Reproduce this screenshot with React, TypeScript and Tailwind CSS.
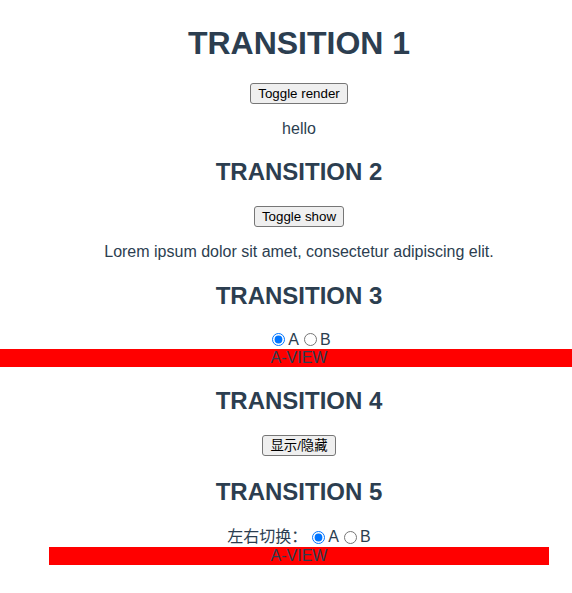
import React, { useState } from 'react';

const font = "font-['Liberation_Sans','Noto_Sans_CJK_SC',Arial,sans-serif]";

const Btn: React.FC<{ label: string; onClick?: () => void }> = ({ label, onClick }) => (
  <button
    onClick={onClick}
    className="h-[21px] px-[7px] text-[13.333px] leading-[15px] text-black bg-[#efefef] border border-[#767676] rounded-[3px]"
  >
    {label}
  </button>
);

const Radio: React.FC<{ checked: boolean; onChange: () => void; label: string }> = ({ checked, onChange, label }) => (
  <>
    <input
      type="radio"
      checked={checked}
      onChange={onChange}
      className="w-[13px] h-[13px] ml-[5px] mr-[3px] accent-[#0075ff]"
    />
    <span>{label}</span>
  </>
);

export default function App() {
  const [render, setRender] = useState(true);
  const [show, setShow] = useState(true);
  const [view3, setView3] = useState('A');
  const [view4, setView4] = useState(true);
  const [view5, setView5] = useState('A');

  return (
    <div className={`w-full overflow-hidden bg-white ${font} text-[#2c3e50] text-center text-[16px]`}>
      <div className="w-[598px] pb-[28px]">
        <h1 className="mt-[24.5px] text-[32px] leading-[37px] font-bold">TRANSITION 1</h1>
        <div className="mt-[21.5px] flex justify-center">
          <Btn label="Toggle render" onClick={() => setRender(!render)} />
        </div>
        <p className="mt-[15.6px] leading-[18.4px] h-[18.4px]">{render ? 'hello' : ''}</p>

        <h2 className="mt-[19.8px] text-[24px] leading-[27.6px] font-bold">TRANSITION 2</h2>
        <div className="mt-[20.5px] flex justify-center">
          <Btn label="Toggle show" onClick={() => setShow(!show)} />
        </div>
        <p className={`mt-[16px] leading-[18.4px] h-[18.4px] ${show ? '' : 'invisible'}`}>
          Lorem ipsum dolor sit amet, consectetur adipiscing elit.
        </p>

        <h2 className="mt-[20.5px] text-[24px] leading-[27.6px] font-bold">TRANSITION 3</h2>
        <div className="mt-[21.3px] h-[18.4px] flex items-center justify-center leading-[18.4px]">
          <Radio checked={view3 === 'A'} onChange={() => setView3('A')} label="A" />
          <Radio checked={view3 === 'B'} onChange={() => setView3('B')} label="B" />
        </div>
        <div className="h-[18px] leading-[18px] bg-[#ff0000]">{view3}-VIEW</div>

        <h2 className="mt-[20px] text-[24px] leading-[27.6px] font-bold">TRANSITION 4</h2>
        <div className="mt-[20.6px] flex justify-center">
          <Btn label="显示/隐藏" onClick={() => setView4(!view4)} />
        </div>

        <h2 className="mt-[21.3px] text-[24px] leading-[27.6px] font-bold">TRANSITION 5</h2>
        <div className="mt-[23.3px] h-[18.4px] flex items-center justify-center leading-[18.4px]">
          <span>左右切换：</span>
          <Radio checked={view5 === 'A'} onChange={() => setView5('A')} label="A" />
          <Radio checked={view5 === 'B'} onChange={() => setView5('B')} label="B" />
        </div>
        <div className="mx-auto w-[500px] h-[18px] leading-[18px] bg-[#ff0000]">{view5}-VIEW</div>
      </div>
    </div>
  );
}
